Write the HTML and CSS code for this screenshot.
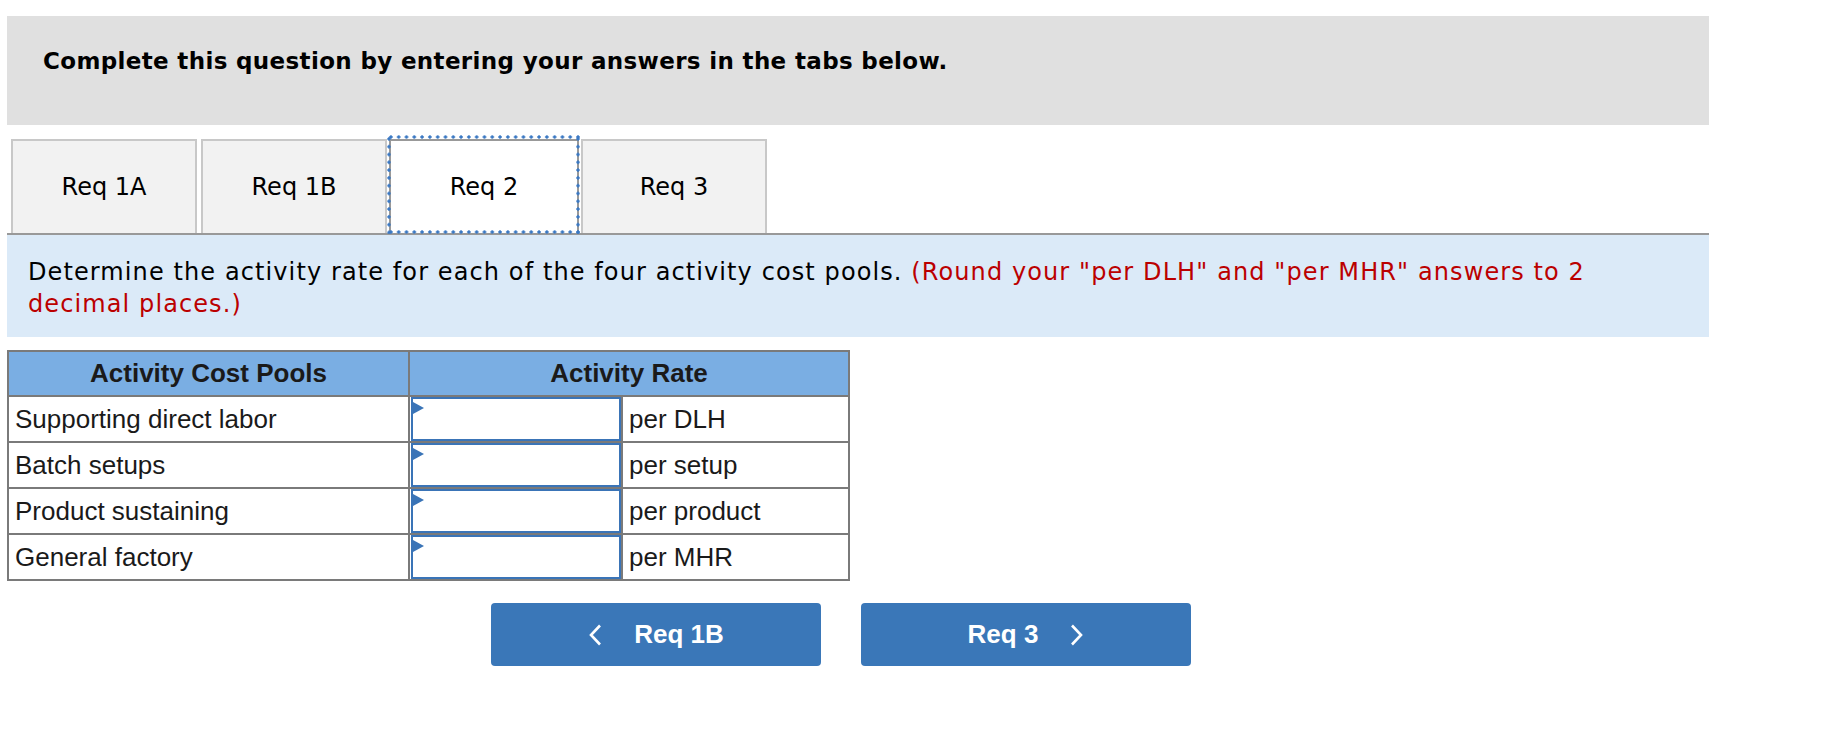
FILE: index.html
```html
<!DOCTYPE html>
<html>
<head>
<meta charset="utf-8">
<link rel="stylesheet" href="styles.css">
</head>
<body>
<div class="page">
  <div class="banner">Complete this question by entering your answers in the tabs below.</div>
  <div class="tabs">
    <div class="tab first">Req 1A</div>
    <div class="tab">Req 1B</div>
    <div class="tab active">Req 2</div>
    <div class="tab">Req 3</div>
  </div>
  <div class="prompt">Determine the activity rate for each of the four activity cost pools. <span class="note">(Round your "per DLH" and "per MHR" answers to 2</span> <span class="note">decimal places.)</span></div>
  <table class="grid">
    <colgroup><col class="w1"><col class="w2"><col class="w3"></colgroup>
    <thead>
      <tr><th>Activity Cost Pools</th><th colspan="2">Activity Rate</th></tr>
    </thead>
    <tbody>
      <tr><td class="c1">Supporting direct labor</td><td class="c2"><div class="inp"></div></td><td class="c3">per DLH</td></tr>
      <tr><td class="c1">Batch setups</td><td class="c2"><div class="inp"></div></td><td class="c3">per setup</td></tr>
      <tr><td class="c1">Product sustaining</td><td class="c2"><div class="inp"></div></td><td class="c3">per product</td></tr>
      <tr><td class="c1">General factory</td><td class="c2"><div class="inp"></div></td><td class="c3">per MHR</td></tr>
    </tbody>
  </table>
  <div class="nav">
    <button class="btn"><svg class="chev" width="14" height="22" viewBox="0 0 14 22"><path d="M12 1.5 L3 11 L12 20.5" fill="none" stroke="#fff" stroke-width="2.6"/></svg><span>Req 1B</span></button>
    <button class="btn"><span>Req 3</span><svg class="chev" width="14" height="22" viewBox="0 0 14 22"><path d="M2 1.5 L11 11 L2 20.5" fill="none" stroke="#fff" stroke-width="2.6"/></svg></button>
  </div>
</div>
</body>
</html>
```
FILE: styles.css
```css
html, body {
  margin: 0;
  padding: 0;
  background: #fff;
}
.page {
  padding: 16px 0 0 7px;
  width: 1702px;
}
.banner {
  background: #e0e0e0;
  height: 109px;
  box-sizing: border-box;
  padding: 31px 0 0 36px;
  font-family: "DejaVu Sans", Verdana, sans-serif;
  font-weight: bold;
  font-size: 23px;
  letter-spacing: 0.35px;
  line-height: 28px;
  color: #000;
}
.tabs {
  display: flex;
  margin-top: 14px;
  padding-left: 4px;
  border-bottom: 2px solid #999;
  height: 94px;
}
.tab {
  box-sizing: border-box;
  width: 186px;
  height: 94px;
  margin-right: 2px;
  background: #f2f2f2;
  border: 2px solid #c8c8c8;
  border-bottom: none;
  display: flex;
  align-items: center;
  justify-content: center;
  font-family: "DejaVu Sans", Verdana, sans-serif;
  font-size: 24px;
  color: #000;
}
.tab.first {
  margin-right: 4px;
}
.tab.active {
  width: 190px;
  background: #fff;
  border: 2px solid #999;
  border-bottom: none;
  position: relative;
}
.tab.active::after {
  content: "";
  position: absolute;
  left: -4px;
  top: -6px;
  right: -3px;
  bottom: -1px;
  background:
    radial-gradient(circle, #3a78c3 1.4px, transparent 1.9px) left top / 7.8px 4px repeat-x,
    radial-gradient(circle, #3a78c3 1.4px, transparent 1.9px) left bottom / 7.8px 4px repeat-x,
    radial-gradient(circle, #3a78c3 1.4px, transparent 1.9px) left top / 4px 7.8px repeat-y,
    radial-gradient(circle, #3a78c3 1.4px, transparent 1.9px) right top / 4px 7.8px repeat-y;
  pointer-events: none;
}
.prompt {
  background: #dbeaf8;
  height: 102px;
  box-sizing: border-box;
  padding: 21px 80px 0 21px;
  font-family: "DejaVu Sans", Verdana, sans-serif;
  font-size: 24px;
  letter-spacing: 1.1px;
  line-height: 32px;
  color: #000;
}
.note {
  color: #bb0000;
}
.grid {
  margin-top: 13px;
  border-collapse: collapse;
  table-layout: fixed;
  width: 841px;
  font-family: "Liberation Sans", Arial, sans-serif;
  font-size: 26px;
  color: #1a1a1a;
}
.w1 { width: 401px; }
.w2 { width: 213px; }
.w3 { width: 227px; }
.grid th, .grid td {
  border: 2px solid #7a7a7a;
  padding: 0;
}
.grid th {
  background: #7aaee3;
  height: 43px;
  font-weight: bold;
  text-align: center;
}
.grid td {
  height: 44px;
}
.grid td.c1 {
  padding-left: 6px;
  text-align: left;
}
.grid td.c2 {
  padding: 0 0 0 1px;
}
.grid td.c3 {
  padding-left: 6px;
}
.inp {
  position: relative;
  box-sizing: border-box;
  width: 100%;
  height: 44px;
  border: 2px solid #3a74b7;
  background: #fff;
}
.inp::before {
  content: "";
  position: absolute;
  left: 0;
  top: 3px;
  border-left: 11px solid #3a74b7;
  border-top: 6px solid transparent;
  border-bottom: 6px solid transparent;
}
.nav {
  display: flex;
  gap: 40px;
  margin: 22px 0 0 484px;
}
.btn {
  width: 330px;
  height: 63px;
  border: none;
  border-radius: 4px;
  background: #3a77b8;
  color: #fff;
  font-family: "Liberation Sans", Arial, sans-serif;
  font-weight: bold;
  font-size: 26px;
  display: flex;
  align-items: center;
  justify-content: center;
  gap: 32px;
  padding: 0;
}
.chev {
  display: block;
}
```
